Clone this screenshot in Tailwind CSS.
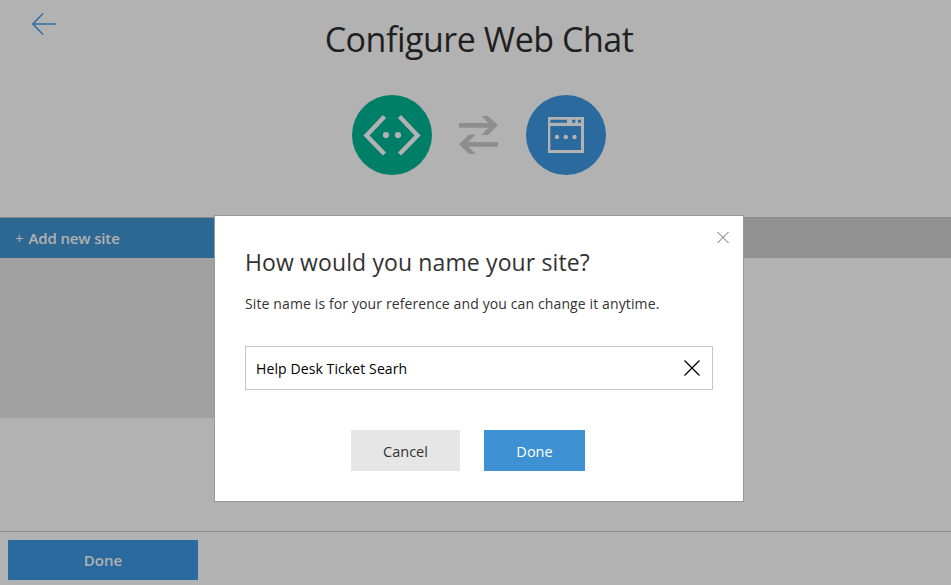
<!DOCTYPE html>
<html lang="en">
<head>
<meta charset="utf-8">
<title>Configure Web Chat</title>
<script src="https://cdn.jsdelivr.net/npm/@tailwindcss/browser@4"></script>
</head>
<body class="h-[585px] w-[951px] overflow-hidden bg-[#b2b2b2] font-['Open_Sans','Noto_Sans',sans-serif] text-[#1f1f1f]">
<div class="relative flex h-[585px] flex-col">
  <header class="relative flex h-[217px] shrink-0 flex-col items-center pl-[7px]">
    <button class="absolute left-8 top-3 h-6 w-6" aria-label="Back">
      <svg width="25" height="24" viewBox="0 0 25 24" fill="none" stroke="#2f6fa3" stroke-width="1.6"><path d="M24 12H1.500M11 1.500.900 12 11 22.500"/></svg>
    </button>
    <h1 class="mt-[15px] h-[48px] whitespace-nowrap text-[34px] leading-[48px] tracking-[-0.48px]">Configure Web Chat</h1>
    <div class="mt-8 flex items-center">
      <svg width="80" height="80" viewBox="0 0 80 80"><circle cx="40" cy="40" r="40" fill="#007f68"/><path d="M32.500 21.500 14.500 40.500l18 18.500M47.500 21.500l18 19-18 18.500" fill="none" stroke="#b2b2b2" stroke-width="4.400"/><circle cx="34" cy="40" r="3.100" fill="#b2b2b2"/><circle cx="46" cy="40" r="3.100" fill="#b2b2b2"/></svg>
      <svg class="ml-[27px]" width="40" height="40" viewBox="0 0 40 40" fill="#8e8e8e"><path d="M0 8h29.500L22.500 1H29l10 9.300L29 20h-6.500l7-7.300H0zM39 27H9.500l7-7.500H10L0 29.300 10 39h6.500l-7-7.300H39z"/></svg>
      <svg class="ml-[27px]" width="80" height="80" viewBox="0 0 80 80"><circle cx="40" cy="40" r="40" fill="#2a6a9e"/><path fill="#b2b2b2" fill-rule="evenodd" d="M22 22h36v36H22zM24.300 24.700v3H41v-3zM46.300 24.700v3h3v-3zM52 24.700v3h3v-3zM24.300 31v24H55V31z"/><g fill="#b2b2b2"><circle cx="31" cy="42" r="2.200"/><circle cx="39.800" cy="42" r="2.200"/><circle cx="48.500" cy="42" r="2.200"/></g></svg>
    </div>
  </header>
  <nav class="flex h-[41px] shrink-0 border-t border-[#8b8b8b] bg-[#919191]">
    <button class="flex w-[215px] items-center bg-[#2d6893] pl-[15px] text-[15px] font-semibold text-[#b2b2b2]"><span class="mr-[5px] font-normal">+</span><span class="tracking-[-0.15px]">Add new site</span></button>
  </nav>
  <aside class="h-[160px] w-[215px] shrink-0 bg-[#a1a1a1]"></aside>
  <footer class="mt-auto h-[54px] border-t border-[#8e8e8e] pl-2 pt-2">
    <button class="h-10 w-[190px] rounded-[1px] bg-[#2a6a9e] text-[15px] font-semibold text-[#b2b2b2]">Done</button>
  </footer>

  <section role="dialog" class="absolute left-[214px] top-[215px] h-[287px] w-[530px] border border-[#989898] bg-white px-[30px] text-[#333]">
    <button class="absolute right-3.5 top-[16px] h-3 w-3" aria-label="Close"><svg width="12" height="12" viewBox="0 0 12 12" fill="none" stroke="#666" stroke-width="1"><path d="M.5 0l11 11M11.500 0l-11 11"/></svg></button>
    <h2 class="mt-[28px] h-9 whitespace-nowrap text-[23px] leading-9 tracking-[0.12px]">How would you name your site?</h2>
    <p class="mt-3 h-6 whitespace-nowrap text-[14px] leading-6 tracking-[0.12px]">Site name is for your reference and you can change it anytime.</p>
    <div class="mt-[30px] flex h-[44px] w-[468px] items-center justify-between border border-[#c8c8c8] pl-2.5 pr-3 text-[14px] text-black">
      <span class="whitespace-nowrap tracking-[0.1px]">Help Desk Ticket Searh</span>
      <svg width="16" height="16" viewBox="0 0 16 16" fill="none" stroke="#000" stroke-width="1.300"><path d="M.5.500l15 15M15.500.500l-15 15"/></svg>
    </div>
    <div class="mt-10 flex gap-6 pl-[106px] text-[14.500px]">
      <button class="h-[41px] w-[109px] bg-[#e6e6e6] pt-[2px]">Cancel</button>
      <button class="h-[41px] w-[101px] bg-[#3e92d3] pt-[2px] text-white">Done</button>
    </div>
  </section>
</div>
</body>
</html>
